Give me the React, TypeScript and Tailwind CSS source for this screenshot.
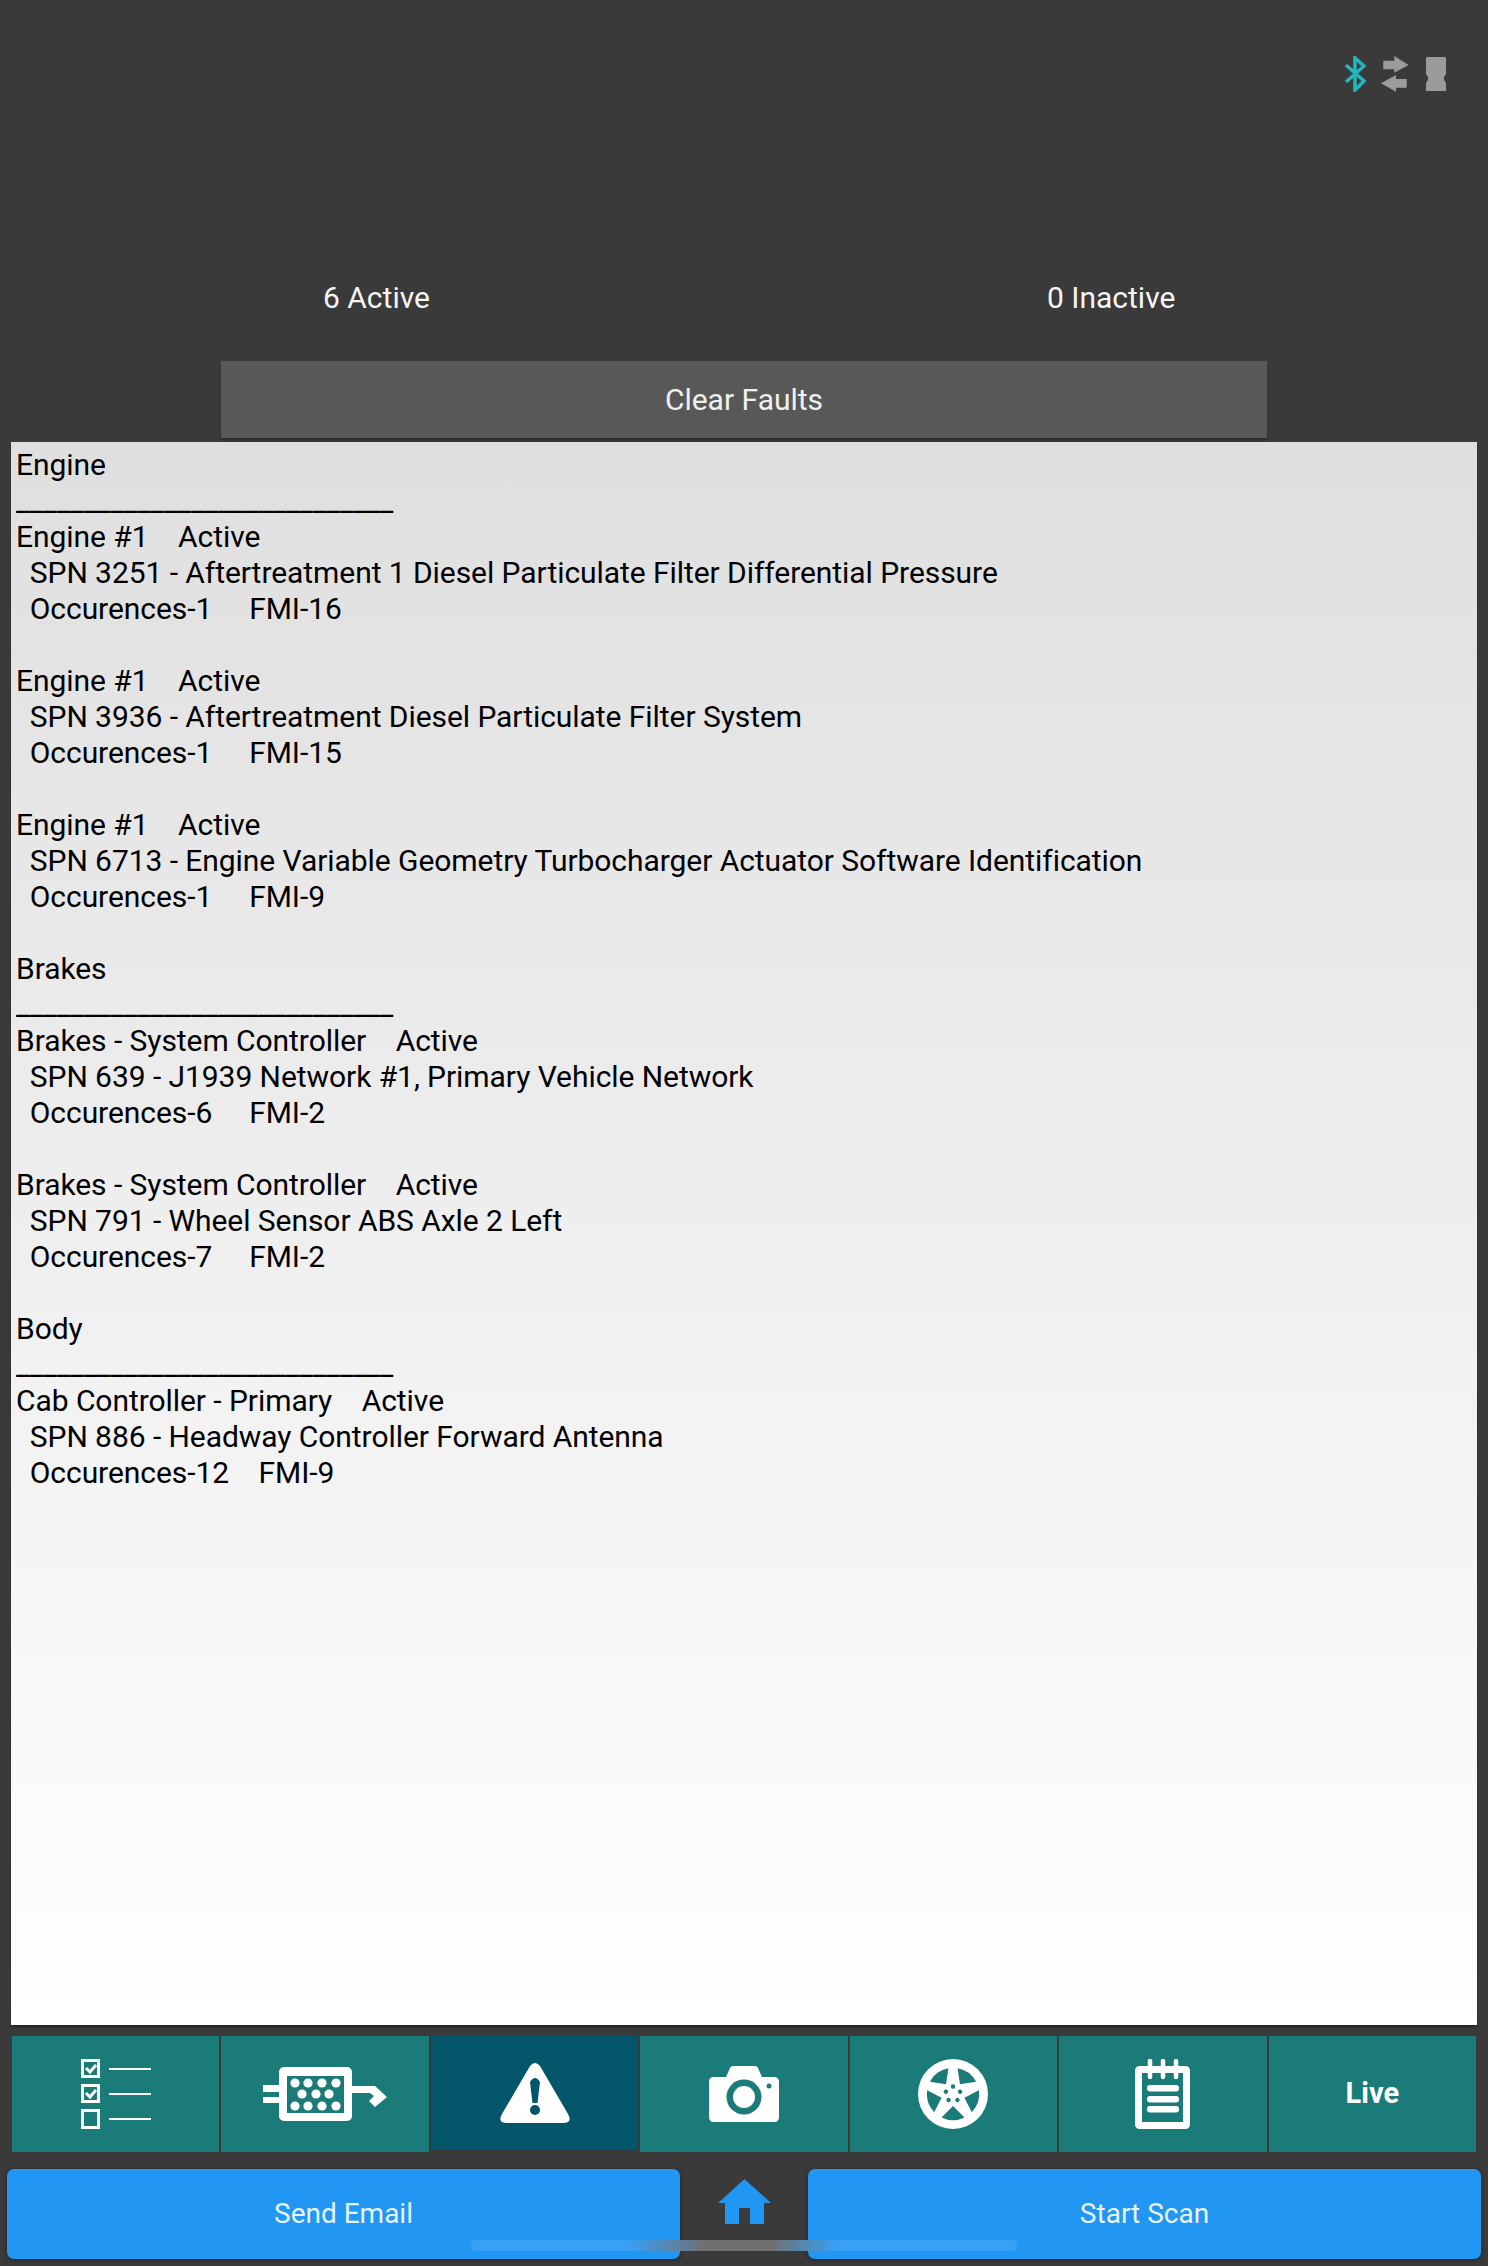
const sections = [
  {
    title: "Engine",
    faults: [
      { head: "Engine #1", spn: "SPN 3251 - Aftertreatment 1 Diesel Particulate Filter Differential Pressure", occ: "Occurences-1", fmi: "FMI-16", gap: "     " },
      { head: "Engine #1", spn: "SPN 3936 - Aftertreatment Diesel Particulate Filter System", occ: "Occurences-1", fmi: "FMI-15", gap: "     " },
      { head: "Engine #1", spn: "SPN 6713 - Engine Variable Geometry Turbocharger Actuator Software Identification", occ: "Occurences-1", fmi: "FMI-9", gap: "     " },
    ],
  },
  {
    title: "Brakes",
    faults: [
      { head: "Brakes - System Controller", spn: "SPN 639 - J1939 Network #1, Primary Vehicle Network", occ: "Occurences-6", fmi: "FMI-2", gap: "     " },
      { head: "Brakes - System Controller", spn: "SPN 791 - Wheel Sensor ABS Axle 2 Left", occ: "Occurences-7", fmi: "FMI-2", gap: "     " },
    ],
  },
  {
    title: "Body",
    faults: [
      { head: "Cab Controller - Primary", spn: "SPN 886 - Headway Controller Forward Antenna", occ: "Occurences-12", fmi: "FMI-9", gap: "    " },
    ],
  },
];

const rule = "_".repeat(28);

function StatusIcons() {
  return (
    <div className="flex h-[137px] items-start justify-end gap-[15px] pr-[42px] pt-[56px]">
      <svg width="22" height="36" viewBox="0 0 22 36" fill="none" stroke="#26b5bd" strokeWidth="3.5">
        <path d="M2 9 L20 25 L11 34 V2 L20 10 L2 26" />
      </svg>
      <svg width="28" height="36" viewBox="0 0 28 36" fill="#9b9b9b">
        <path d="M2.3 4.7 H13.3 V0 L27.7 9 L13.3 16.7 V13.3 H2.3 Z" />
        <path d="M25.7 23 H15 V19 L0 27.3 L15 35.7 V31.7 H25.7 Z" />
      </svg>
      <svg className="ml-[2px] mt-[1px]" width="20" height="34" viewBox="0 0 20 34" fill="#9b9b9b">
        <path d="M1 0 H19 L20 1 V17 L18 20 V23 L20 26 V34 H0 V26 L2 23 V20 L0 17 V1 Z" />
      </svg>
    </div>
  );
}

function TabIcon({ name }: { name: string }) {
  if (name === "checklist") {
    return (
      <svg width="70" height="70" viewBox="0 0 70 70" fill="none" stroke="#fff">
        <rect x="1.5" y="1.5" width="16" height="16" strokeWidth="3" />
        <path d="M5 9 L9 13 L15 6" strokeWidth="3" />
        <rect x="1.5" y="26.5" width="16" height="16" strokeWidth="3" />
        <path d="M5 34 L9 38 L15 31" strokeWidth="3" />
        <rect x="1.5" y="51.5" width="16" height="17" strokeWidth="3" />
        <path d="M28 10 H70 M28 35 H70 M28 60 H70" strokeWidth="2" />
      </svg>
    );
  }
  if (name === "filter") {
    const holes = [
      [32, 16], [45, 16], [59, 16], [73, 16],
      [39, 27], [53, 27], [66, 27],
      [32, 39], [45, 39], [59, 39], [73, 39],
    ];
    return (
      <svg width="125" height="54" viewBox="0 0 125 54">
        <path d="M0 18 H18 V25 H0 Z M0 30 H18 V36 H0 Z" fill="#fff" />
        <rect x="16" y="0" width="73" height="54" rx="5" fill="#fff" />
        <rect x="24" y="9" width="57" height="37" fill="#1a7b78" />
        {holes.map(([x, y], i) => (
          <circle key={i} cx={x} cy={y} r="4.6" fill="#fff" />
        ))}
        <path d="M88 19 H112 L124 30 L112 40 L106 34 L111 29 L107 26 H88 Z" fill="#fff" />
      </svg>
    );
  }
  if (name === "warning") {
    return (
      <svg width="70" height="62" viewBox="0 0 70 62">
        <path d="M30 4 Q35 -2 40 4 L68 52 Q73 61 63 61 H7 Q-3 61 2 52 Z" fill="#fff" />
        <path d="M30 20 Q35 12 40 20 L37.5 41 H32.5 Z" fill="#03556a" />
        <circle cx="35" cy="48" r="5" fill="#03556a" />
      </svg>
    );
  }
  if (name === "camera") {
    return (
      <svg width="70" height="56" viewBox="0 0 70 56">
        <path d="M5 11 H17 L21 2 Q22 0 24 0 H46 Q48 0 49 2 L53 11 H65 Q70 11 70 16 V51 Q70 56 65 56 H5 Q0 56 0 51 V16 Q0 11 5 11 Z" fill="#fff" />
        <circle cx="35" cy="31" r="17.5" fill="#1a7b78" />
        <circle cx="35" cy="31" r="11" fill="#fff" />
        <circle cx="60" cy="20" r="2.5" fill="#1a7b78" />
      </svg>
    );
  }
  if (name === "wheel") {
    return (
      <svg width="70" height="70" viewBox="0 0 70 70">
        <circle cx="35" cy="35" r="35" fill="#fff" />
        {[0, 72, 144, 216, 288].map((a) => (
          <g key={a} transform={`rotate(${a} 35 35)`}>
            <path d="M35 47 L46.5 58.5 A26 26 0 0 1 23.5 58.5 Z" fill="#1a7b78" />
            <circle cx="35" cy="27.5" r="2.2" fill="#1a7b78" />
          </g>
        ))}
      </svg>
    );
  }
  if (name === "notepad") {
    return (
      <svg width="55" height="70" viewBox="0 0 55 70">
        <path d="M5 7 H50 Q55 7 55 12 V65 Q55 70 50 70 H5 Q0 70 0 65 V12 Q0 7 5 7 Z" fill="#fff" />
        <rect x="7" y="14" width="41" height="49" fill="#1a7b78" />
        <path d="M15 2 V18 M28 2 V18 M41 2 V18" stroke="#fff" strokeWidth="4.5" strokeLinecap="round" />
        <rect x="12" y="26" width="32" height="6.5" rx="3" fill="#fff" />
        <rect x="12" y="37" width="32" height="6.5" rx="3" fill="#fff" />
        <rect x="12" y="47" width="32" height="6.5" rx="3" fill="#fff" />
      </svg>
    );
  }
  return <span className="text-[29px] font-bold text-white">Live</span>;
}

const tabs = ["checklist", "filter", "warning", "camera", "wheel", "notepad", "live"];

export default function App() {
  return (
    <div className="flex h-[2266px] w-[1488px] flex-col bg-[#3a3a3a] font-['Roboto',sans-serif]">
      <StatusIcons />
      <div className="mt-[143px] grid grid-cols-2 text-[30px] leading-[36px] text-[#f5f5f5]">
        <div className="pl-[323px]">6 Active</div>
        <div className="pl-[303px]">0 Inactive</div>
      </div>
      <button className="mx-auto mt-[45px] h-[77px] w-[1046px] shrink-0 bg-[#585858] text-[30px] text-[#f0f0f0] shadow-[0_2px_2px_rgba(0,0,0,0.3)]">
        Clear Faults
      </button>
      <div className="mx-[11px] mt-[4px] h-[1583px] shrink-0 bg-gradient-to-b from-[#dfdfdf] to-white pl-[5px] pt-[5px] text-[30px] leading-[36px] tracking-[-0.06px] text-black shadow-[0_2px_2px_rgba(0,0,0,0.4)]">
        {sections.map((s) => (
          <div key={s.title}>
            <div>{s.title}</div>
            <div>{rule}</div>
            {s.faults.map((f) => (
              <div key={f.spn} className="whitespace-pre">
                <div>
                  {f.head}
                  {"    "}Active
                </div>
                <div className="-ml-[1px]">
                  {"  "}
                  {f.spn}
                </div>
                <div className="-ml-[1px]">
                  {"  "}
                  {f.occ}
                  {f.gap}
                  {f.fmi}
                </div>
                <div className="h-[36px]" />
              </div>
            ))}
          </div>
        ))}
      </div>
      <div className="mx-[12px] mt-[11px] grid h-[116px] shrink-0 grid-cols-7 gap-[2px]">
        {tabs.map((t) => (
          <div key={t} className={`flex items-center justify-center ${t === "warning" ? "mb-[2px] bg-[#03556a]" : "bg-[#1a7b78]"}`}>
            <TabIcon name={t} />
          </div>
        ))}
      </div>
      <div className="relative mx-[7px] mt-[17px] flex h-[90px] shrink-0 items-start justify-between">
        <button className="h-[90px] w-[673px] rounded-[7px] bg-[#2196f3] text-[28px] text-[#e8f3fd] shadow-[0_1px_4px_rgba(0,0,0,0.4)]">Send Email</button>
        <svg className="mt-[10px]" width="53" height="45" viewBox="0 0 53 45" fill="#2196f3">
          <path d="M26.5 0 L53 24 H46 V45 H32 V29 H21 V45 H7 V24 H0 Z" />
        </svg>
        <button className="h-[90px] w-[673px] rounded-[7px] bg-[#2196f3] text-[28px] text-[#e8f3fd] shadow-[0_1px_4px_rgba(0,0,0,0.4)]">Start Scan</button>
        <div className="absolute left-[464px] top-[71px] h-[11px] w-[546px] rounded-full bg-[linear-gradient(90deg,#38a0f5_29%,#707070_43%,#707070_55%,#38a0f5_67%)]" />
      </div>
    </div>
  );
}
